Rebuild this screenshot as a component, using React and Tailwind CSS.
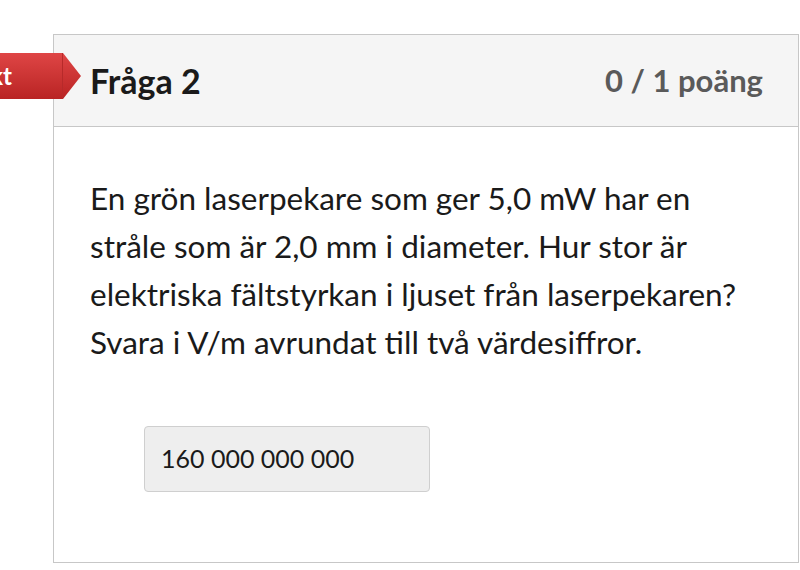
import React from "react";

export default function App() {
  return (
    <div className="relative min-h-screen bg-white pt-[34px] pl-[53px] pr-[1px] font-['Lato',sans-serif]">
      {/* answer marker */}
      <div className="absolute left-0 top-[53px] flex h-[46px]">
        <div className="flex w-[63px] items-center justify-end border-r border-[#b72a2a] bg-gradient-to-b from-[#df4545] to-[#b92323] pr-[50px] whitespace-nowrap">
          <span className="text-[24px] font-bold text-white">Inkorrekt</span>
        </div>
        <svg width="18" height="46" viewBox="0 0 18 46" className="block">
          <defs>
            <linearGradient id="tag" x1="0" y1="0" x2="0" y2="1">
              <stop offset="0" stopColor="#df4545" />
              <stop offset="1" stopColor="#b92323" />
            </linearGradient>
          </defs>
          <polygon points="0,0 18,23 0,46" fill="url(#tag)" />
        </svg>
      </div>

      <div className="border border-[#c7c7c7]">
        {/* Header */}
        <div className="flex h-[92px] items-center justify-between border-b border-[#c7c7c7] bg-[#f5f5f5] pl-[36px] pr-[35px]">
          <h2 className="text-[34px] font-bold text-[#1a1a1a]">Fråga 2</h2>
          <div className="text-[31px] font-bold text-[#5a5a5a]">0 / 1 poäng</div>
        </div>

        {/* Body */}
        <div className="pt-[47px] pb-[70px] pl-[36px] pr-[36px]">
          <p className="text-[31.5px] leading-[48px] text-[#1a1a1a]">
            En grön laserpekare som ger 5,0 mW har en stråle som är 2,0 mm i
            diameter. Hur stor är elektriska fältstyrkan i ljuset från
            laserpekaren? Svara i V/m avrundat till två värdesiffror.
          </p>
          <div className="mt-[60px] ml-[54px] flex h-[66px] w-[286px] items-center rounded-[4px] border border-[#cfcfcf] bg-[#eeeeee] pl-[16px] text-[25px] text-[#1a1a1a]">
            160 000 000 000
          </div>
        </div>
      </div>
    </div>
  );
}
